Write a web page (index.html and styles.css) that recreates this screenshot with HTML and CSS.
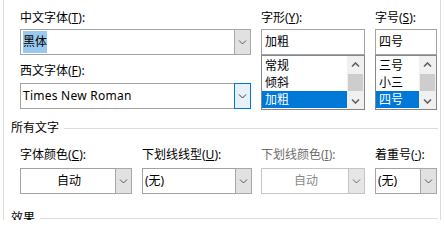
FILE: index.html
```html
<!DOCTYPE html>
<html lang="zh-CN">
<head>
<meta charset="utf-8">
<title>字体</title>
<link rel="stylesheet" href="styles.css">
</head>
<body>
<div class="page">
  <div class="top">
    <div class="col col-font">
      <div class="lbl">中文字体(<u>T</u>):</div>
      <div class="combo">
        <div class="val"><span class="sel-text">黑体</span></div>
        <div class="btn"><svg width="9" height="6" viewBox="0 0 9 6"><path d="M1 1.5 L4.5 5 L8 1.5" fill="none" stroke="#5a5a5a" stroke-width="1"/></svg></div>
      </div>
      <div class="lbl lbl-second">西文字体(<u>F</u>):</div>
      <div class="combo">
        <div class="val latin">Times New Roman</div>
        <div class="btn btn-hover"><svg width="9" height="6" viewBox="0 0 9 6"><path d="M1 1.5 L4.5 5 L8 1.5" fill="none" stroke="#3a3a3a" stroke-width="1"/></svg></div>
      </div>
    </div>
    <div class="col col-style">
      <div class="lbl">字形(<u>Y</u>):</div>
      <div class="textbox">加粗</div>
      <div class="listbox">
        <ul class="items">
          <li>常规</li>
          <li>倾斜</li>
          <li class="selected">加粗</li>
        </ul>
        <div class="scrollbar">
          <div class="arrow"><svg width="9" height="6" viewBox="0 0 9 6"><path d="M1 4.5 L4.5 1 L8 4.5" fill="none" stroke="#606060" stroke-width="1.6"/></svg></div>
          <div class="thumb"></div>
          <div class="arrow"><svg width="9" height="6" viewBox="0 0 9 6"><path d="M1 1.5 L4.5 5 L8 1.5" fill="none" stroke="#606060" stroke-width="1.6"/></svg></div>
        </div>
      </div>
    </div>
    <div class="col col-size">
      <div class="lbl">字号(<u>S</u>):</div>
      <div class="textbox">四号</div>
      <div class="listbox">
        <ul class="items">
          <li>三号</li>
          <li>小三</li>
          <li class="selected">四号</li>
        </ul>
        <div class="scrollbar">
          <div class="arrow"><svg width="9" height="6" viewBox="0 0 9 6"><path d="M1 4.5 L4.5 1 L8 4.5" fill="none" stroke="#606060" stroke-width="1.6"/></svg></div>
          <div class="thumb"></div>
          <div class="arrow"><svg width="9" height="6" viewBox="0 0 9 6"><path d="M1 1.5 L4.5 5 L8 1.5" fill="none" stroke="#606060" stroke-width="1.6"/></svg></div>
        </div>
      </div>
    </div>
  </div>

  <div class="section-head"><span class="section-title">所有文字</span><span class="rule"></span></div>

  <div class="row">
    <div class="field f-color">
      <div class="lbl">字体颜色(<u>C</u>):</div>
      <div class="combo">
        <div class="val center">自动</div>
        <div class="btn"><svg width="9" height="6" viewBox="0 0 9 6"><path d="M1 1.5 L4.5 5 L8 1.5" fill="none" stroke="#5a5a5a" stroke-width="1"/></svg></div>
      </div>
    </div>
    <div class="field f-uline">
      <div class="lbl">下划线线型(<u>U</u>):</div>
      <div class="combo">
        <div class="val">(无)</div>
        <div class="btn"><svg width="9" height="6" viewBox="0 0 9 6"><path d="M1 1.5 L4.5 5 L8 1.5" fill="none" stroke="#5a5a5a" stroke-width="1"/></svg></div>
      </div>
    </div>
    <div class="field f-ucolor">
      <div class="lbl disabled">下划线颜色(<u>I</u>):</div>
      <div class="combo combo-disabled">
        <div class="val center">自动</div>
        <div class="btn"><svg width="9" height="6" viewBox="0 0 9 6"><path d="M1 1.5 L4.5 5 L8 1.5" fill="none" stroke="#6a6a6a" stroke-width="1"/></svg></div>
      </div>
    </div>
    <div class="field f-emph">
      <div class="lbl">着重号(<u>·</u>):</div>
      <div class="combo">
        <div class="val">(无)</div>
        <div class="btn"><svg width="9" height="6" viewBox="0 0 9 6"><path d="M1 1.5 L4.5 5 L8 1.5" fill="none" stroke="#5a5a5a" stroke-width="1"/></svg></div>
      </div>
    </div>
  </div>

  <div class="section-head section-effects"><span class="section-title">效果</span><span class="rule"></span></div>
</div>
</body>
</html>
```

FILE: styles.css
```css
* {
  box-sizing: border-box;
}

html, body {
  margin: 0;
  padding: 0;
  background: #ffffff;
}

body {
  font-family: "Noto Sans", "Noto Sans CJK SC", sans-serif;
  font-size: 12px;
  color: #000000;
  overflow: hidden;
}

.page {
  margin-left: 3px;
  width: 438px;
  height: 220px;
  border-left: 1px solid #dcdcdc;
  border-right: 1px solid #dcdcdc;
  padding: 10px 2px 0 16px;
  overflow: hidden;
}

u {
  text-decoration: underline;
  text-underline-offset: 1px;
}

.lbl {
  height: 16px;
  line-height: 16px;
  margin-bottom: 3px;
  white-space: nowrap;
}

.lbl.disabled {
  color: #6d6d6d;
}

.lbl-second {
  margin-top: 8px;
  margin-bottom: 4px;
}

/* top area */
.top {
  display: flex;
  align-items: flex-start;
}

.col-font {
  width: 231px;
}

.col-style {
  width: 104px;
  margin-left: 10px;
}

.col-size {
  width: 62px;
  margin-left: 10px;
}

/* combobox */
.combo {
  display: flex;
  height: 26px;
  border: 1px solid #a3a3a3;
  background: #ffffff;
}

.combo .val {
  flex: 1;
  padding-left: 2px;
  line-height: 24px;
  white-space: nowrap;
  overflow: hidden;
}

.combo .val.latin {
  letter-spacing: 0.25px;
}

.combo .val.center {
  text-align: center;
}

.sel-text {
  background: #99c9ef;
  padding: 2px 0 3px;
}

.combo .btn {
  width: 17px;
  margin: -1px -1px -1px 0;
  border: 1px solid #a8a8a8;
  background: #e1e1e1;
  display: flex;
  align-items: center;
  justify-content: center;
}

.combo .btn.btn-hover {
  background: #e5f1fb;
  border-color: #0078d7;
}

.combo-disabled {
  border-color: #c4c4c4;
}

.combo-disabled .val {
  color: #8a8a8a;
}

.combo-disabled .btn {
  background: #e6e6e6;
  border-color: #c4c4c4;
}

/* text box + list box */
.textbox {
  height: 26px;
  border: 1px solid #a3a3a3;
  padding-left: 3px;
  line-height: 24px;
}

.listbox {
  height: 55px;
  border: 1px solid #828790;
  display: flex;
  background: #ffffff;
}

.items {
  list-style: none;
  margin: 0;
  padding: 1px 0 0;
  flex: 1;
}

.items li {
  height: 17px;
  line-height: 17px;
  padding-left: 3px;
}

.items li.selected {
  background: #0078d7;
  color: #ffffff;
}

.scrollbar {
  width: 17px;
  background: #f0f0f0;
  display: flex;
  flex-direction: column;
}

.scrollbar .arrow {
  height: 17px;
  display: flex;
  align-items: center;
  justify-content: center;
}

.scrollbar .thumb {
  flex: 1;
  margin: 1px 1px;
  background: #cdcdcd;
}

/* section headings */
.section-head {
  display: flex;
  align-items: center;
  margin-left: -9px;
  margin-top: 10px;
  height: 16px;
  line-height: 16px;
}

.section-title {
  white-space: nowrap;
  padding-right: 5px;
}

.section-head .rule {
  flex: 1;
  height: 1px;
  background: #dcdcdc;
}

.section-effects {
  margin-top: 16px;
}

/* row of four fields */
.row {
  display: flex;
  margin-top: 11px;
}

.row .lbl {
  margin-bottom: 5px;
}

.f-color {
  width: 112px;
}

.f-uline {
  width: 110px;
  margin-left: 10px;
}

.f-ucolor {
  width: 104px;
  margin-left: 9px;
}

.f-emph {
  width: 62px;
  margin-left: 10px;
}
```
